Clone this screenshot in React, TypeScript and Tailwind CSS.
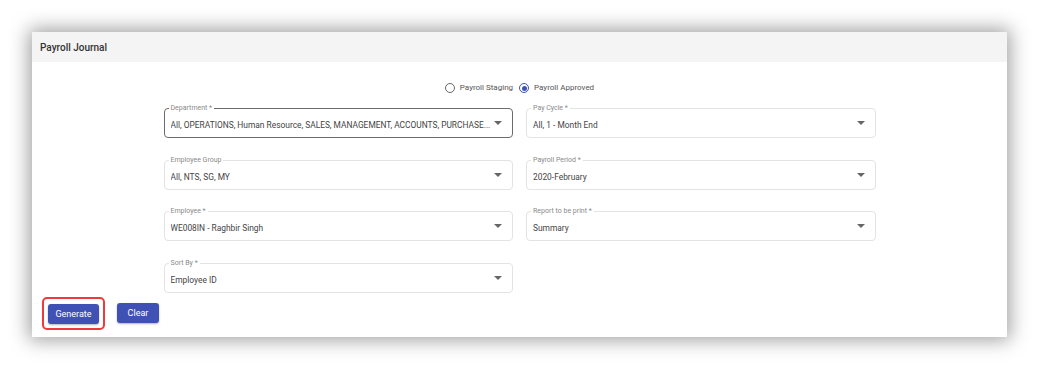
import React from "react";

function Arrow() {
  return (
    <svg width="8" height="4" viewBox="0 0 8 4" className="shrink-0">
      <path d="M0 0 L8 0 L4 4 Z" fill="#666" />
    </svg>
  );
}

function Field({ label, value, focused }: { label: string; value: string; focused?: boolean }) {
  return (
    <div
      className={`relative h-[30px] rounded-[4px] border ${focused ? "border-[#6b6b6b]" : "border-[#e3e3e3]"} flex items-center pl-[6px] pr-[10px]`}
    >
      <span className="absolute left-[4px] top-[-6px] bg-white px-[2px] text-[7px] leading-[10px] text-[#8a8a8a]">
        {label}
      </span>
      <span className="flex-1 whitespace-nowrap overflow-hidden text-[8.4px] leading-[12px] text-[#444] pt-[4px]">
        {value}
      </span>
      <Arrow />
    </div>
  );
}

export default function App() {
  return (
    <div
      className="w-[1039px] h-[370px] bg-white pt-[32px] pl-[32px]"
      style={{ fontFamily: "Roboto, 'Liberation Sans', sans-serif" }}
    >
      <div className="w-[975px] h-[305px] bg-white shadow-[0_0_18px_3px_rgba(0,0,0,0.38)] flex flex-col">
        <div className="h-[30px] bg-[#f4f4f4] flex items-center pl-[8px]">
          <span className="text-[10px] font-medium text-[#333]">Payroll Journal</span>
        </div>
        <div className="flex flex-col">
          <div className="mt-[19px] h-[14px] flex items-center justify-center gap-[6px] text-[8px] text-[#555]">
            <div className="flex items-center gap-[5px]">
              <span className="w-[10px] h-[10px] rounded-full border border-[#666] box-border" />
              <span>Payroll Staging</span>
            </div>
            <div className="flex items-center gap-[5px]">
              <span className="w-[10px] h-[10px] rounded-full border border-[#3f51b5] flex items-center justify-center">
                <span className="w-[5px] h-[5px] rounded-full bg-[#3f51b5]" />
              </span>
              <span>Payroll Approved</span>
            </div>
          </div>
          <div className="mt-[13px] mx-auto w-[712px] grid grid-cols-2 gap-x-[13px] gap-y-[21.5px]">
            <Field
              label="Department *"
              value="All, OPERATIONS, Human Resource, SALES, MANAGEMENT, ACCOUNTS, PURCHASE..."
              focused
            />
            <Field label="Pay Cycle *" value="All, 1 - Month End" />
            <Field label="Employee Group" value="All, NTS, SG, MY" />
            <Field label="Payroll Period *" value="2020-February" />
            <Field label="Employee *" value="WE008IN - Raghbir Singh" />
            <Field label="Report to be print *" value="Summary" />
            <Field label="Sort By *" value="Employee ID" />
          </div>
          <div className="mt-[4px] pl-[10px] flex items-center gap-[12px]">
            <div className="rounded-[5px] border-2 border-[#f03a3a] pt-[5px] pb-[4px] px-[4px]">
              <button className="block w-[51px] h-[20px] rounded-[3px] bg-[#3f51b5] text-white text-[9px] leading-[20px] shadow-[0_1px_2px_rgba(0,0,0,0.3)]">
                Generate
              </button>
            </div>
            <button className="block w-[42px] h-[20px] rounded-[3px] bg-[#3f51b5] text-white text-[9px] leading-[20px] shadow-[0_1px_2px_rgba(0,0,0,0.3)]">
              Clear
            </button>
          </div>
        </div>
      </div>
    </div>
  );
}
